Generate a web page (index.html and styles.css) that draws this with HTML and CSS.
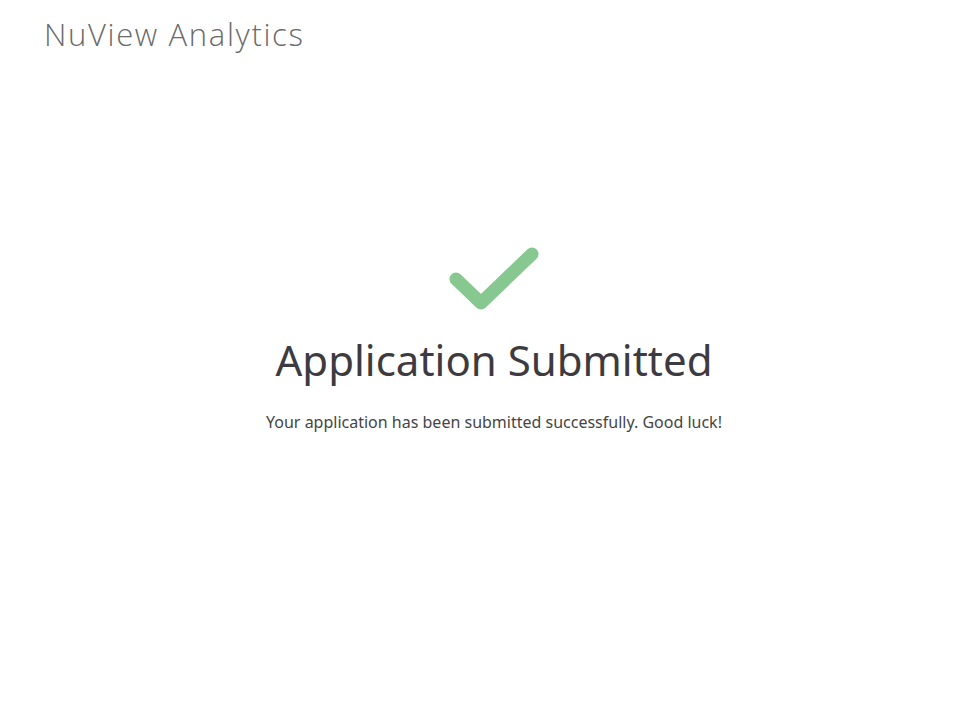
FILE: index.html
```html
<!DOCTYPE html>
<html lang="en">
<head>
<meta charset="utf-8">
<title>NuView Analytics</title>
<link rel="stylesheet" href="styles.css">
</head>
<body>
<header class="topbar">
  <div class="brand">NuView Analytics</div>
</header>
<main class="confirm">
  <svg class="check" width="100" height="70" viewBox="0 0 100 70" aria-hidden="true">
    <polyline points="12,36 37,60 88,11" fill="none" stroke="#86c88f" stroke-width="13" stroke-linecap="round" stroke-linejoin="round"/>
  </svg>
  <h1 class="title">Application Submitted</h1>
  <p class="message">Your application has been submitted successfully. Good luck!</p>
</main>
</body>
</html>
```
FILE: styles.css
```css
html, body {
  margin: 0;
  padding: 0;
  background: #ffffff;
}
body {
  font-family: "Noto Sans", "Open Sans", sans-serif;
  color: #3f3f3f;
  width: 972px;
  height: 711px;
  overflow: hidden;
}
.topbar {
  padding: 14px 0 0 44px;
  height: 40px;
}
.brand {
  font-family: "Open Sans", "Noto Sans", sans-serif;
  font-weight: 300;
  font-size: 31px;
  line-height: 40px;
  color: #6b6b6b;
  letter-spacing: 1.65px;
}
.confirm {
  display: flex;
  flex-direction: column;
  align-items: center;
  padding-top: 189px;
  padding-left: 16px;
}
.check {
  display: block;
}
.title {
  margin: 22px 0 0 0;
  font-weight: 400;
  font-size: 42px;
  line-height: 50px;
  color: #3d3b3f;
}
.message {
  margin: 27px 0 0 0;
  font-size: 16px;
  line-height: 20px;
  color: #454545;
}
```
